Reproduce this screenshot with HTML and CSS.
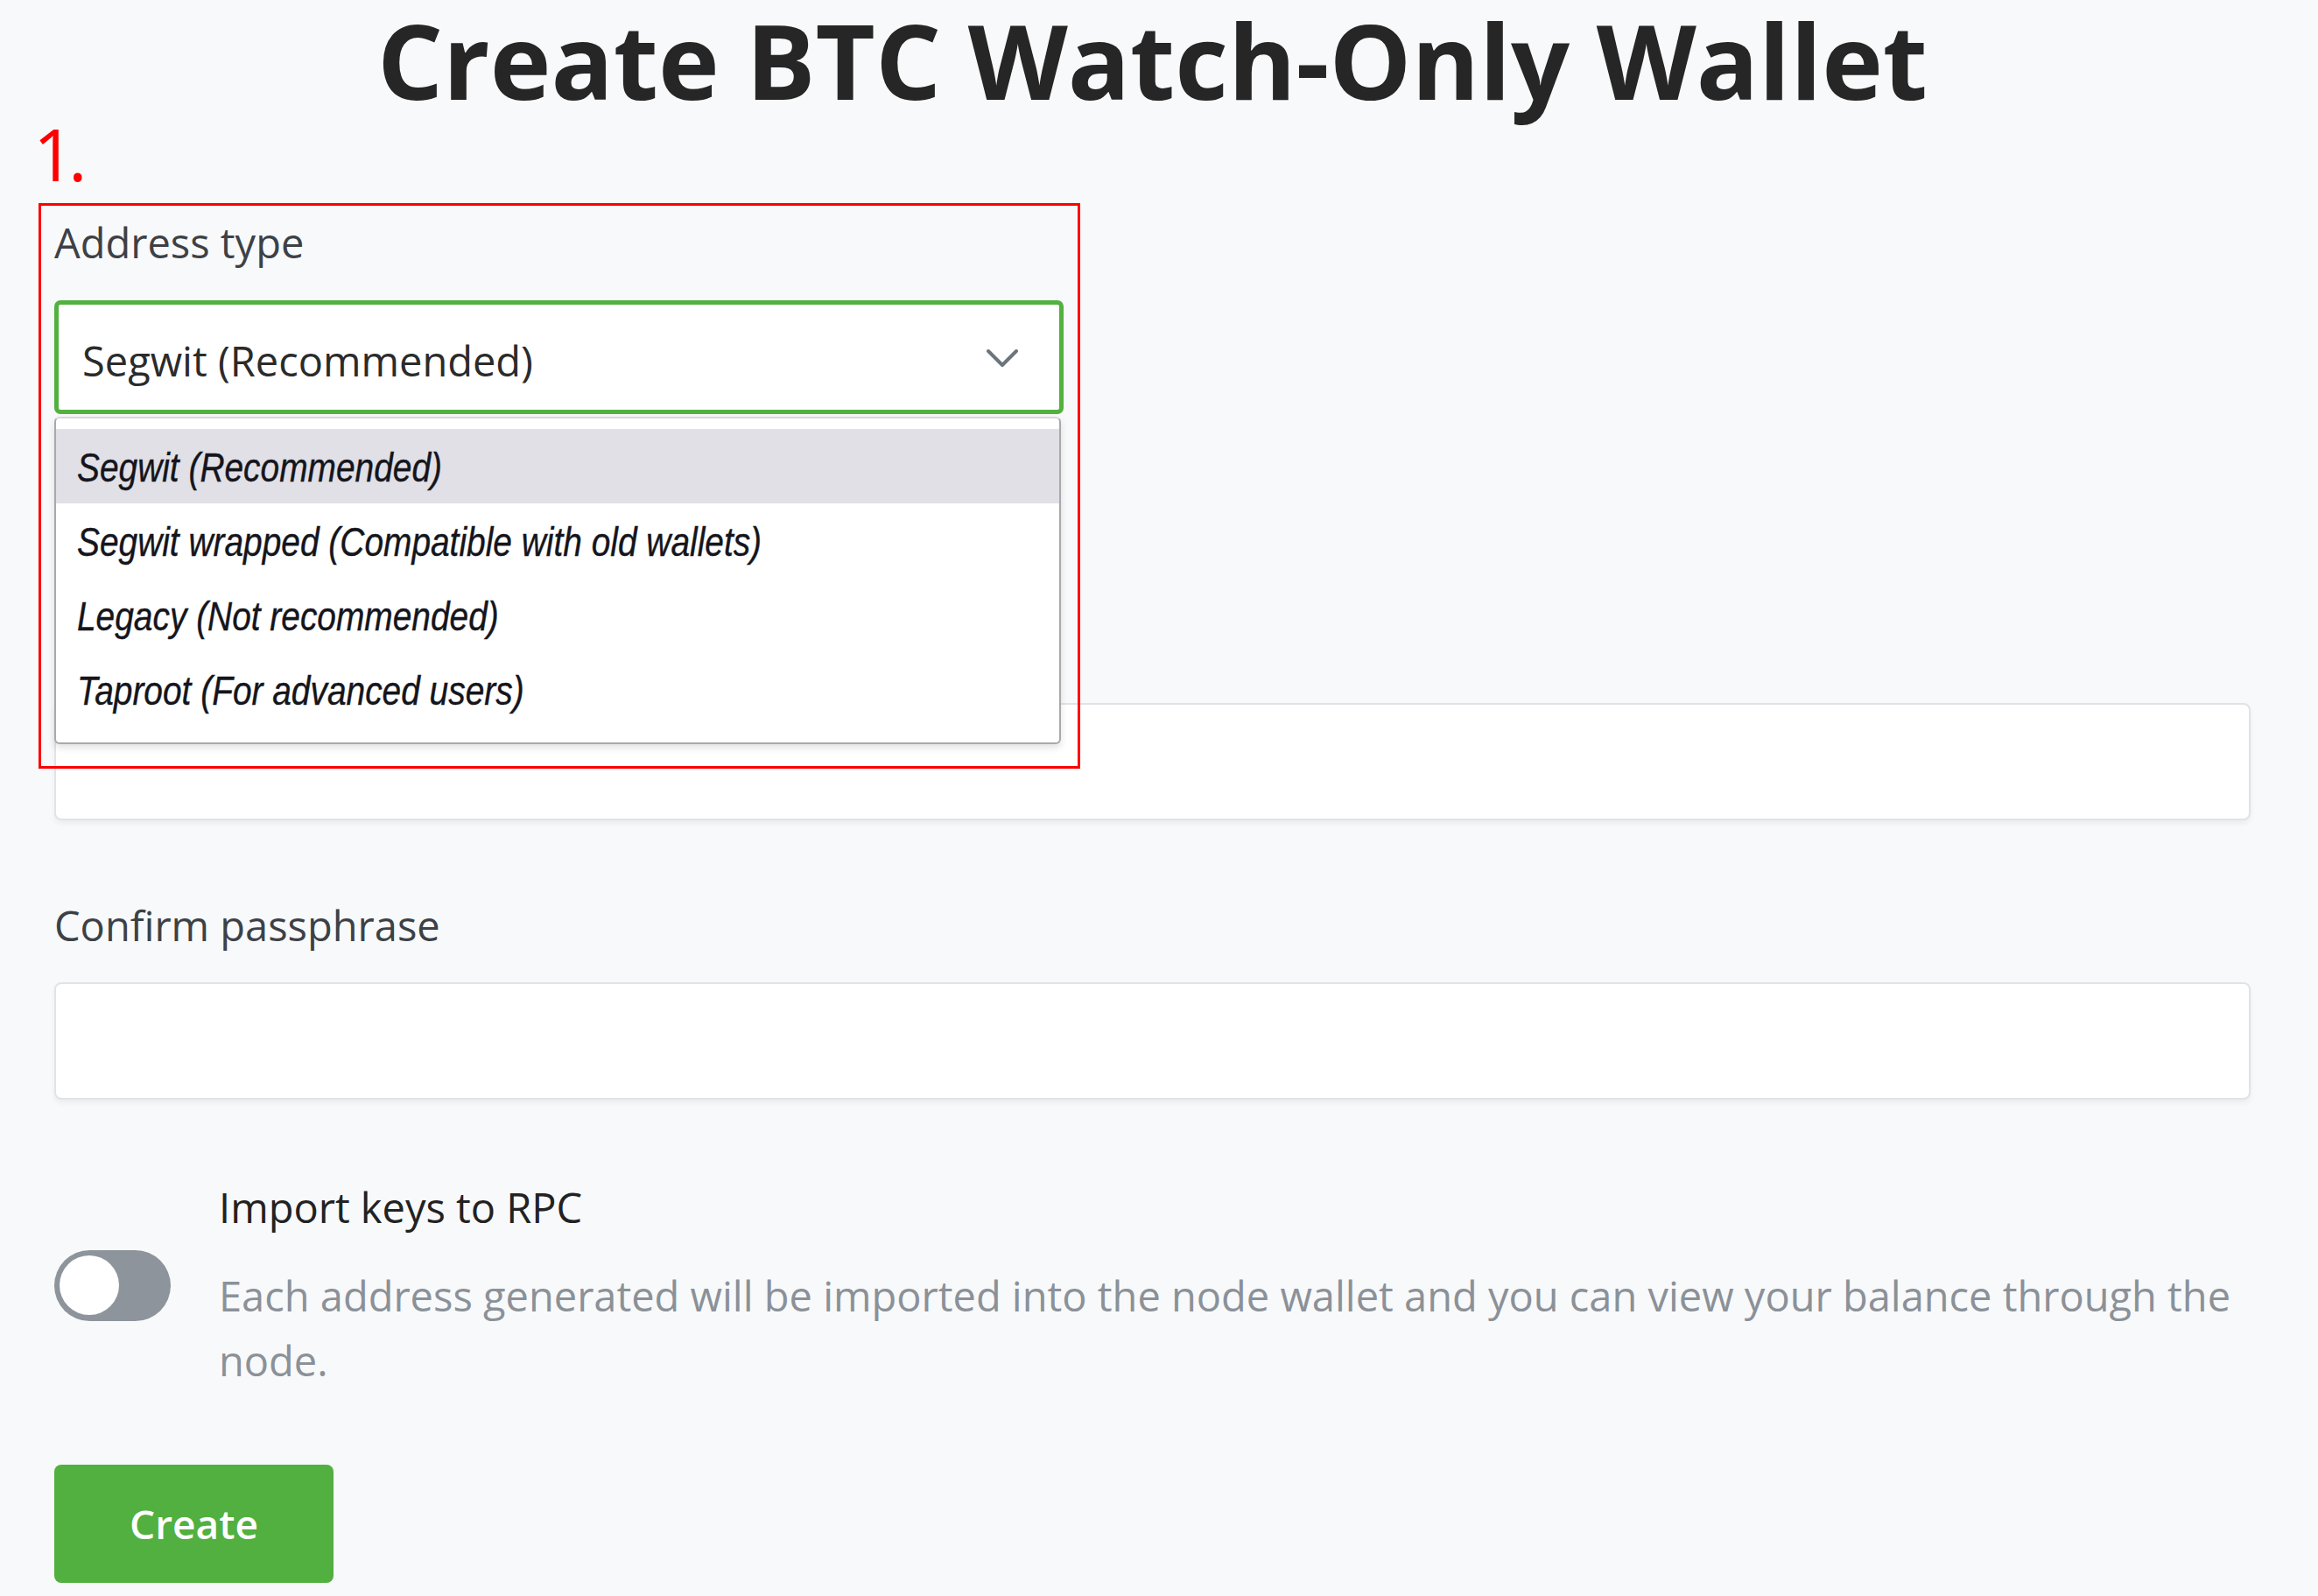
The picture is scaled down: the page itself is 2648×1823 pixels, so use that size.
FILE: index.html
```html
<!DOCTYPE html>
<html lang="en">
<head>
<meta charset="utf-8">
<title>Create BTC Watch-Only Wallet</title>
<link rel="stylesheet" href="styles.css">
</head>
<body>
<main class="page">
  <h1 class="title">Create BTC Watch-Only Wallet</h1>
  <form class="form">
    <div class="field field-type">
      <label class="label">Address type</label>
      <div class="select-wrap">
        <div class="select">
          <span class="select-value">Segwit (Recommended)</span>
          <svg class="chevron" width="36" height="22" viewBox="0 0 36 22" aria-hidden="true"><path d="M2 3 L18 19 L34 3" fill="none" stroke="#6c757d" stroke-width="4" stroke-linecap="round" stroke-linejoin="round"/></svg>
        </div>
        <ul class="dropdown">
          <li class="option is-active"><span>Segwit (Recommended)</span></li>
          <li class="option"><span>Segwit wrapped (Compatible with old wallets)</span></li>
          <li class="option"><span>Legacy (Not recommended)</span></li>
          <li class="option"><span>Taproot (For advanced users)</span></li>
        </ul>
      </div>
    </div>
    <div class="field field-pass">
      <label class="label label-covered">Passphrase</label>
      <div class="input"></div>
    </div>
    <div class="field field-confirm">
      <label class="label">Confirm passphrase</label>
      <div class="input"></div>
    </div>
    <div class="toggle-row">
      <div class="toggle"><span class="knob"></span></div>
      <div class="toggle-text">
        <div class="toggle-title">Import keys to RPC</div>
        <p class="toggle-desc">Each address generated will be imported into the node wallet and you can view your balance through the node.</p>
      </div>
    </div>
    <button type="button" class="btn">Create</button>
  </form>
  <div class="annot-num">1.</div>
  <div class="annot-box"></div>
</main>
</body>
</html>
```

FILE: styles.css
```css
* { box-sizing: border-box; }
html, body { margin: 0; padding: 0; }
body {
  background: #f8f9fa;
  font-family: "Open Sans", "Liberation Sans", sans-serif;
  color: #212529;
  width: 2648px;
  height: 1823px;
  overflow: hidden;
}
.page {
  position: relative;
  padding: 0 77px 0 62px;
}
.title {
  margin: 0;
  font-size: 118px;
  font-weight: 700;
  line-height: 137px;
  text-align: center;
  color: #262626;
}
.form { display: flex; flex-direction: column; }
.field { display: flex; flex-direction: column; }
.label {
  font-size: 47px;
  line-height: 69px;
  color: #3d4146;
  margin-bottom: 30px;
}
.label-covered { visibility: hidden; }
.field-type { margin-top: 106px; }
.field-type .label { margin-bottom: 31px; }
.field-pass { margin-top: 231px; }
.field-confirm { margin-top: 86px; }

.select-wrap { position: relative; width: 1153px; }
.select {
  height: 130px;
  border: 5px solid #52b13f;
  border-radius: 7px;
  background: #fff;
  display: flex;
  align-items: center;
  justify-content: space-between;
  padding: 8px 47px 0 27px;
  font-size: 47px;
  line-height: 69px;
  color: #2b2b2b;
}
.chevron { display: block; margin-top: -6px; }
.dropdown {
  position: absolute;
  top: 133px;
  left: 0;
  width: 1150px;
  margin: 0;
  padding: 12px 0 18px;
  list-style: none;
  background: #fff;
  border: 2px solid #a9a9a9;
  border-top-color: #d8d8d8;
  border-radius: 6px;
  box-shadow: 0 4px 8px rgba(0, 0, 0, 0.12);
  z-index: 2;
}
.option {
  height: 85px;
  padding: 3px 0 0 24px;
  line-height: 82px;
  font-family: "Liberation Sans", Arial, sans-serif;
  font-style: italic;
  font-size: 46px;
  color: #15151c;
  white-space: nowrap;
  -webkit-text-stroke: 0.4px #15151c;
}
.option span { display: inline-block; transform: scaleX(0.845); transform-origin: left center; }
.option.is-active { background: #e0e0e6; }

.input {
  height: 134px;
  background: #fff;
  border: 2px solid #e0e3e7;
  border-radius: 8px;
  box-shadow: 0 4px 6px rgba(0, 0, 0, 0.05);
}

.toggle-row {
  margin-top: 89px;
  display: flex;
  align-items: center;
  gap: 55px;
}
.toggle {
  flex: 0 0 auto;
  width: 133px;
  height: 81px;
  border-radius: 41px;
  background: #8e949b;
  padding: 6px;
}
.knob {
  display: block;
  width: 68px;
  height: 68px;
  border-radius: 50%;
  background: #fff;
}
.toggle-text { flex: 1 1 auto; }
.toggle-title {
  font-size: 47px;
  line-height: 69px;
  color: #222;
}
.toggle-desc {
  margin: 29px 0 0;
  font-size: 47px;
  line-height: 74px;
  color: #8b9198;
}
.btn {
  align-self: flex-start;
  margin-top: 82px;
  height: 135px;
  padding: 0 86px;
  border: 0;
  border-radius: 8px;
  background: #51b03f;
  color: #fff;
  font-family: "Open Sans", "Liberation Sans", sans-serif;
  font-size: 46px;
  font-weight: 600;
  line-height: 69px;
}

.annot-num {
  position: absolute;
  left: 38px;
  top: 134px;
  font-size: 82px;
  line-height: 82px;
  letter-spacing: -7px;
  color: #ff0000;
}
.annot-box {
  position: absolute;
  left: 44px;
  top: 232px;
  width: 1190px;
  height: 646px;
  border: 3px solid #ff0000;
  z-index: 3;
  pointer-events: none;
}
```
